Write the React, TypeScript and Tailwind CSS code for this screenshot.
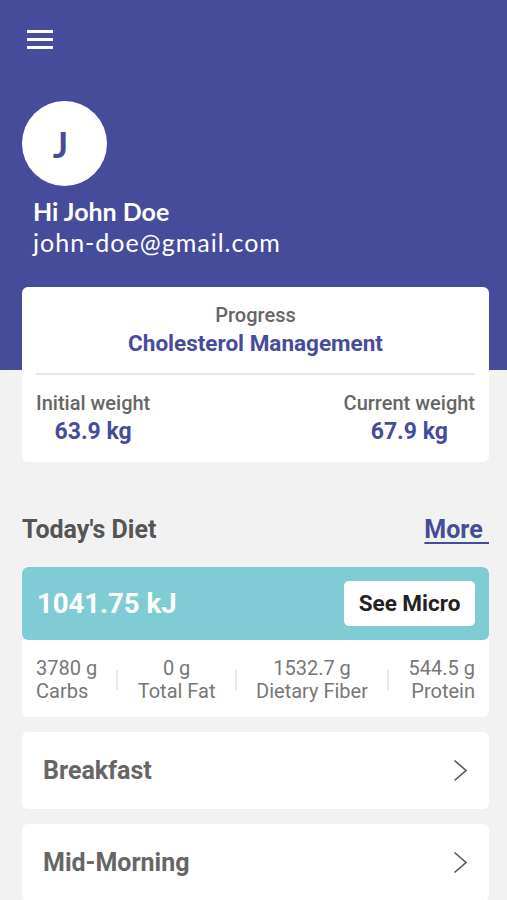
import React from 'react';

const MACROS = [
  { value: '3780 g', label: 'Carbs', align: 'items-start' },
  { value: '0 g', label: 'Total Fat', align: 'items-center' },
  { value: '1532.7 g', label: 'Dietary Fiber', align: 'items-center' },
  { value: '544.5 g', label: 'Protein', align: 'items-end' },
];

const MEALS = ['Breakfast', 'Mid-Morning'];

const Chevron = () => (
  <svg width="15" height="23" viewBox="0 0 15 23" fill="none" stroke="#555" strokeWidth="1.6">
    <path d="M1.5 1.5 L13 11.5 L1.5 21.5" />
  </svg>
);

export default function App() {
  return (
    <div className="w-[507px] h-[900px] overflow-hidden bg-[#f2f2f2] font-['Roboto',sans-serif]">
      {/* Header */}
      <div className="bg-[#464c9c] px-[22px] pt-[30px] pb-[112px] text-white">
        <button className="flex flex-col gap-[5px] w-[26px] ml-[5px]">
          <span className="h-[3px] w-full bg-white" />
          <span className="h-[3px] w-full bg-white" />
          <span className="h-[3px] w-full bg-white" />
        </button>
        <div className="mt-[52px] w-[85px] h-[85px] rounded-full bg-white flex items-center justify-center">
          <span className="text-[#464c9c] text-[36px] font-bold font-['Lato',sans-serif] -ml-[8px]">J</span>
        </div>
        <div className="mt-[10px] ml-[11px] font-['Lato',sans-serif]">
          <div className="text-[25px] font-bold leading-[30px]">Hi John Doe</div>
          <div className="text-[25px] tracking-[1px] leading-[32px]">john-doe@gmail.com</div>
        </div>
      </div>

      <div className="pl-[22px] pr-[18px] -mt-[83px]">
        {/* Progress card */}
        <div className="bg-white rounded-[6px] px-[14px] pt-[15px] pb-[14px]">
          <div className="text-center text-[20px] font-medium text-[#666] leading-[26px]">Progress</div>
          <div className="text-center text-[22.5px] font-bold text-[#464c9c] leading-[30px]">Cholesterol Management</div>
          <div className="h-[2px] bg-[#e6e6e9] mt-[15px]" />
          <div className="flex justify-between mt-[15px]">
            {[['Initial weight', '63.9 kg'], ['Current weight', '67.9 kg']].map(([label, val]) => (
              <div key={label} className="flex flex-col items-center">
                <span className="text-[20px] font-medium text-[#666] leading-[26px]">{label}</span>
                <span className="text-[23px] font-bold text-[#464c9c] leading-[32px]">{val}</span>
              </div>
            ))}
          </div>
        </div>

        {/* Today's Diet */}
        <div className="flex justify-between items-center mt-[53px]">
          <span className="text-[25px] font-bold text-[#555] leading-[30px]">Today's Diet</span>
          <span className="text-[25px] font-bold text-[#464c9c] underline underline-offset-[4px] leading-[30px]">More&nbsp;</span>
        </div>

        <div className="mt-[22px] rounded-[6px] bg-white overflow-hidden">
          <div className="bg-[#80ccd5] rounded-[6px] h-[73px] flex items-center justify-between pl-[15px] pr-[14px]">
            <span className="text-white text-[27.5px] font-bold">1041.75 kJ</span>
            <button className="bg-white rounded-[5px] w-[131px] h-[45px] text-[22.5px] font-bold text-[#222]">See Micro</button>
          </div>
          <div className="flex items-center justify-between px-[14px] pt-[17px] pb-[14px]">
            {MACROS.map((m, i) => (
              <React.Fragment key={m.label}>
                {i > 0 && <span className="w-[2px] h-[20px] bg-[#e8e8e8]" />}
                <div className={`flex flex-col ${m.align} text-[20px] text-[#777] leading-[23px]`}>
                  <span>{m.value}</span>
                  <span>{m.label}</span>
                </div>
              </React.Fragment>
            ))}
          </div>
        </div>

        {/* Meals */}
        <div className="mt-[15px] flex flex-col gap-[15px]">
          {MEALS.map((meal) => (
            <div key={meal} className="bg-white rounded-[6px] h-[77px] flex items-center justify-between pl-[21px] pr-[21px]">
              <span className="text-[25px] font-bold text-[#666]">{meal}</span>
              <Chevron />
            </div>
          ))}
        </div>
      </div>
    </div>
  );
}
